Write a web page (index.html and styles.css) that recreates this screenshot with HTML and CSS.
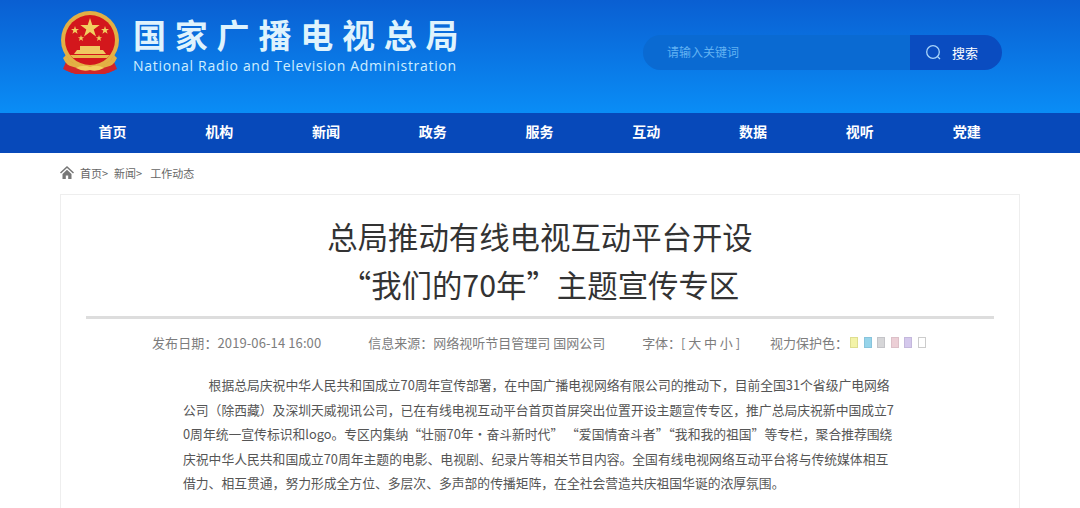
FILE: index.html
```html
<!DOCTYPE html>
<html lang="zh-CN">

<head>
    <meta charset="UTF-8">
    <title>总局推动有线电视互动平台开设“我们的70年”主题宣传专区</title>
    <link rel="stylesheet" href="styles.css">
</head>

<body>
    <header class="header">
        <div class="brand">
            <svg class="emblem" width="60" height="64" viewBox="0 0 60 64">
                <path d="M8 46 L3 58 L12 62 L48 62 L57 58 L52 46 Z" fill="#d0262a"/>
                <circle cx="30" cy="29" r="29" fill="#e3b044"/>
                <circle cx="30" cy="29" r="25" fill="#d3171c"/>
                <path d="M30 7l2.300 7h7.400l-6 4.400 2.300 7-6-4.300-6 4.300 2.300-7-6-4.400h7.400z" fill="#f2d060"/>
                <path d="M15 15l1 3h3l-2.400 1.800 1 3-2.600-1.900-2.600 1.900 1-3L11 18h3z" fill="#f2d060"/>
                <path d="M45 15l1 3h3l-2.400 1.800 1 3-2.600-1.900-2.600 1.900 1-3L41 18h3z" fill="#f2d060"/>
                <path d="M21 24l.8 2.200h2.300l-1.800 1.400.7 2.300-2-1.400-2 1.400.7-2.300-1.800-1.400h2.300z" fill="#f2d060"/>
                <path d="M39 24l.8 2.200h2.300l-1.800 1.400.7 2.300-2-1.400-2 1.400.7-2.300-1.800-1.400h2.300z" fill="#f2d060"/>
                <path d="M20 35h20v4h3l3 4H14l3-4h3z" fill="#f0c860"/>
                <path d="M10 44h40l-3 3H13z" fill="#e8b94a"/>
                <path d="M6 44q4 8 14 11l10 1 10-1q10-3 14-11l3 3q-3 8-14 12H17Q6 55 3 47z" fill="#e3b044"/>
                <path d="M7 54l10 3h26l10-3 2 5-10 4H15L5 59z" fill="#d0262a"/>
                <path d="M16 57q7-4 14-1q7-3 14 1q-7 4-14 2q-7 2-14-2z" fill="#f2d060"/>
            </svg>
            <div class="brand-text">
                <div class="brand-cn">国家广播电视总局</div>
                <div class="brand-en">National Radio and Television Administration</div>
            </div>
        </div>
        <div class="search">
            <div class="search-input">请输入关键词</div>
            <div class="search-btn">
                <svg width="17" height="17" viewBox="0 0 17 17" fill="none" stroke="#a9d4fa" stroke-width="1.300">
                    <circle cx="8" cy="8" r="6.300"/>
                    <path d="M12.600 12.600l2.400 2.400"/>
                </svg>
                <span>搜索</span>
            </div>
        </div>
    </header>

    <nav class="nav">
        <a>首页</a>
        <a>机构</a>
        <a>新闻</a>
        <a>政务</a>
        <a>服务</a>
        <a>互动</a>
        <a>数据</a>
        <a>视听</a>
        <a>党建</a>
    </nav>

    <div class="crumbs">
        <svg width="14" height="13" viewBox="0 0 14 13">
            <path d="M7 0L0 6.500l1 1L7 2l6 5.500 1-1zM2.500 8L7 3.800 11.500 8v5H8.200V9.500H5.800V13H2.500z" fill="#777"/>
        </svg>
        <span>首页&gt;</span>
        <span>新闻&gt;</span>
        <span class="crumb-last">工作动态</span>
    </div>

    <main class="article">
        <h1 class="title">总局推动有线电视互动平台开设<br>“我们的70年”主题宣传专区</h1>
        <div class="meta">
            <span class="meta-date">发布日期：2019-06-14 16:00</span>
            <span class="meta-source">信息来源：网络视听节目管理司 国网公司</span>
            <span class="meta-font">字体：[ 大 中 小 ]</span>
            <span>视力保护色：</span>
            <div class="swatches">
                <i class="swatch yellow"></i>
                <i class="swatch blue"></i>
                <i class="swatch grey"></i>
                <i class="swatch pink"></i>
                <i class="swatch purple"></i>
                <i class="swatch white"></i>
            </div>
        </div>
        <p class="content">根据总局庆祝中华人民共和国成立70周年宣传部署，在中国广播电视网络有限公司的推动下，目前全国31个省级广电网络公司（除西藏）及深圳天威视讯公司，已在有线电视互动平台首页首屏突出位置开设主题宣传专区，推广总局庆祝新中国成立70周年统一宣传标识和logo。专区内集纳“壮丽70年•奋斗新时代” “爱国情奋斗者”“我和我的祖国”等专栏，聚合推荐围绕庆祝中华人民共和国成立70周年主题的电影、电视剧、纪录片等相关节目内容。全国有线电视网络互动平台将与传统媒体相互借力、相互贯通，努力形成全方位、多层次、多声部的传播矩阵，在全社会营造共庆祖国华诞的浓厚氛围。</p>
    </main>
</body>

</html>
```

FILE: styles.css
```css
* {
    box-sizing: border-box;
}

html, body {
    margin: 0;
    height: 508px;
    overflow: hidden;
}

body {
    background: #fff;
    font-family: "Noto Sans CJK SC", "Noto Sans", sans-serif;
}

/* cabecera */
.header {
    height: 113px;
    padding: 11px 78px 0 60px;
    display: flex;
    justify-content: space-between;
    align-items: flex-start;
    background: linear-gradient(#0a5fd2, #0a8df6);
}

.brand {
    display: flex;
    gap: 13px;
}

.emblem {
    flex: none;
}

.brand-text {
    padding-top: 1px;
}

.brand-cn {
    font-size: 33px;
    line-height: 44px;
    font-weight: 700;
    letter-spacing: 8.800px;
    color: #dff3fd;
    white-space: nowrap;
}

.brand-en {
    font-family: "Open Sans", sans-serif;
    font-size: 14px;
    line-height: 20px;
    letter-spacing: .7px;
    color: #cfeeff;
    white-space: nowrap;
}

.search {
    width: 359px;
    height: 35px;
    margin-top: 24px;
    display: flex;
    border-radius: 18px;
    overflow: hidden;
}

.search-input {
    flex: 1;
    padding-left: 24px;
    background: #0a6ad2;
    color: #62b2f2;
    font-size: 12px;
    line-height: 33px;
}

.search-btn {
    width: 92px;
    padding-left: 15px;
    display: flex;
    align-items: center;
    gap: 10px;
    background: #0a4cc0;
    color: #fff;
    font-size: 13px;
}

/* menu */
.nav {
    height: 40px;
    padding: 0 59px 0 60px;
    display: flex;
    background: #0749ba;
}

.nav a {
    flex: 1;
    text-align: center;
    color: #fff;
    font-size: 14px;
    font-weight: 700;
    line-height: 37px;
    padding-right: 2px;
}

.crumbs {
    height: 41px;
    padding: 0 0 2px 60px;
    display: flex;
    align-items: center;
    gap: 6px;
    color: #666;
    font-size: 11px;
}

.crumb-last {
    margin-left: 2px;
}

/* articulo */
.article {
    width: 960px;
    height: 314px;
    margin-left: 60px;
    padding: 17px 25px 0;
    border: 1px solid #eee;
    border-bottom: 0;
}

.title {
    margin: 0;
    padding-bottom: 8px;
    border-bottom: 3px solid #ddd;
    text-align: center;
    color: #333;
    font-size: 30.400px;
    font-weight: 400;
    line-height: 48px;
}

.meta {
    height: 46px;
    padding-left: 66px;
    display: flex;
    align-items: center;
    color: #7d7d7d;
    font-size: 13px;
}

.meta-date {
    margin-right: 47px;
    letter-spacing: .1px;
}

.meta-source {
    margin-right: 37px;
}

.meta-font {
    margin-right: 30px;
    letter-spacing: -.05px;
}

.swatches {
    display: flex;
    gap: 5.600px;
    margin-left: 2px;
}

.swatch {
    width: 8px;
    height: 11px;
    border: 1px solid #ccc;
}

.yellow { background: #f3f3a8; border-color: #dede90; }
.blue { background: #96d4ea; border-color: #88c4dc; }
.grey { background: #d6d6d8; border-color: #c4c4c8; }
.pink { background: #eccfd6; border-color: #dcc0c8; }
.purple { background: #d4c8ec; border-color: #c4b8dc; }
.white { background: #fff; border-color: #ccc; }

.content {
    margin: 8px 0 0 97px;
    width: 711px;
    color: #555;
    font-size: 12.800px;
    line-height: 24.500px;
    text-indent: 2em;
    word-break: break-all;
}
```
